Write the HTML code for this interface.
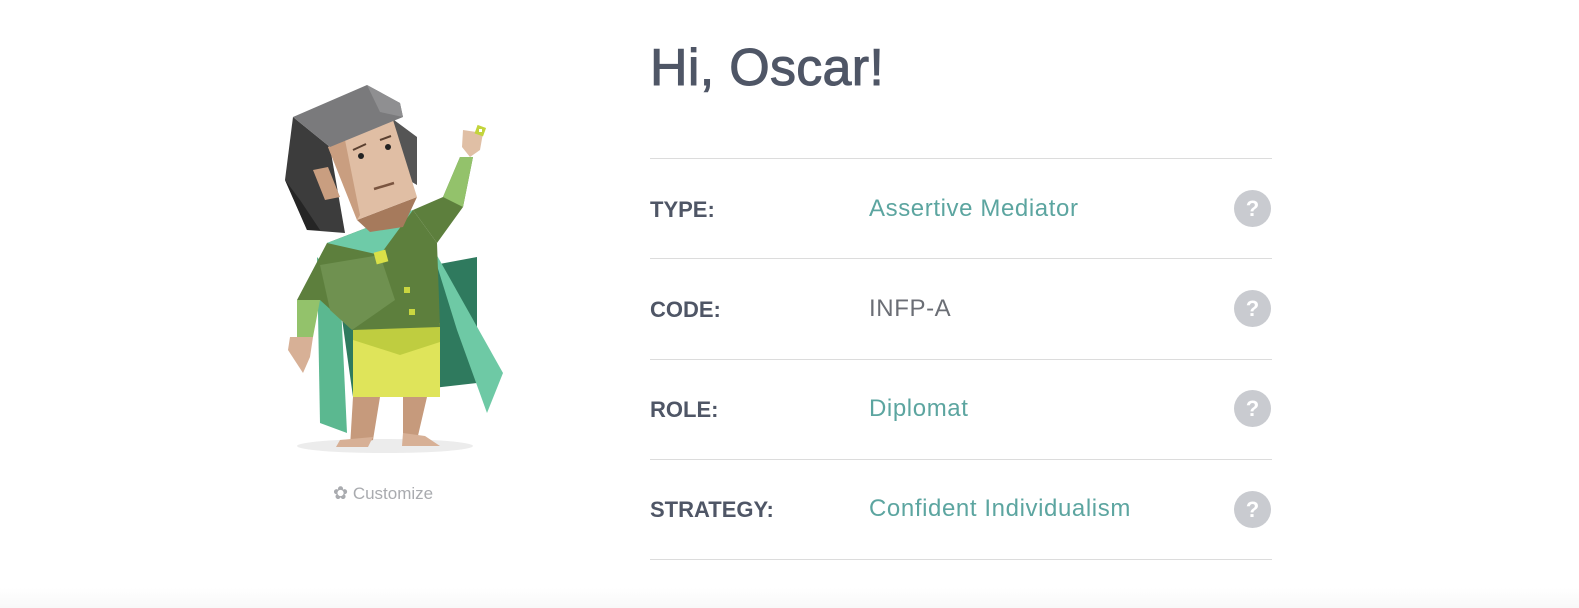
<!DOCTYPE html>
<html><head><meta charset="utf-8"><style>
html,body{margin:0;padding:0;background:#fff;width:1579px;height:608px;overflow:hidden;font-family:"Liberation Sans",sans-serif}
.bar{position:absolute;left:0;top:588px;width:1579px;height:20px;background:linear-gradient(#fff,#f8f8f8)}
h1{position:absolute;left:650px;top:38px;margin:0;font-size:52px;font-weight:normal;color:#4f5666;letter-spacing:0.3px;-webkit-text-stroke:1px #4f5666}
.line{position:absolute;left:650px;width:622px;height:1px;background:#dcdcdc}
.lab{position:absolute;left:650px;font-size:22px;font-weight:bold;color:#4f5666}
.val{position:absolute;left:869px;font-size:24px;letter-spacing:0.6px;color:#5ca5a0}
.q{position:absolute;left:1234px;width:37px;height:37px;border-radius:50%;background:#c9cbd0;color:#fff;font-weight:bold;font-size:22px;text-align:center;line-height:37px}
.cust{position:absolute;left:333px;top:483px;font-size:17px;color:#a9abaf}
</style></head><body>
<svg style="position:absolute;left:0;top:0" width="600" height="520">
<ellipse cx="385" cy="446" rx="88" ry="7" fill="#ececec"/>
<polygon points="337,283 477,257 477,383 353,397" fill="#2f7a5e"/>
<polygon points="317,257 340,283 347,433 320,423" fill="#5bb890"/>
<polygon points="430,243 503,373 487,413 457,330" fill="#6ec9a5"/>
<polygon points="353,397 380,397 373,440 350,447" fill="#c69a7c"/>
<polygon points="403,397 427,397 417,440 403,440" fill="#c69a7c"/>
<polygon points="340,440 373,437 368,447 336,447" fill="#d7b096"/>
<polygon points="403,433 425,436 440,446 402,446" fill="#d7b096"/>
<polygon points="353,330 440,323 440,397 353,397" fill="#dfe45a"/>
<polygon points="353,330 440,323 440,342 400,355 353,340" fill="#bfcd40"/>
<polygon points="297,300 327,243 413,210 437,243 440,327 353,330 320,300" fill="#5d7f3d"/>
<polygon points="320,265 380,255 395,300 352,330 330,310" fill="#6f9150"/>
<polygon points="327,243 413,210 380,255" fill="#6ecba8"/>
<polygon points="413,210 443,197 460,157 473,157 463,207 437,243" fill="#5d7f3d"/>
<polygon points="443,197 460,157 473,157 463,207" fill="#93c26b"/>
<polygon points="463,130 483,133 480,150 470,157 462,147" fill="#e0bfa5"/>
<rect x="476" y="126" width="9" height="9" fill="#c3d43c" transform="rotate(20 480 130)"/>
<rect x="479" y="129" width="3" height="3" fill="#fff"/>
<polygon points="297,300 320,300 313,337 297,337" fill="#93c26b"/>
<polygon points="290,337 313,337 310,357 303,373 288,350" fill="#d7b096"/>
<rect x="375" y="251" width="12" height="12" fill="#d9e048" transform="rotate(-15 381 257)"/>
<rect x="404" y="287" width="6" height="6" fill="#c9d640"/>
<rect x="409" y="309" width="6" height="6" fill="#c9d640"/>
<polygon points="285,180 293,117 330,147 345,233 307,230" fill="#3c3c3c"/>
<polygon points="285,180 300,200 320,230 307,230" fill="#252525"/>
<polygon points="390,117 417,137 417,185 400,175" fill="#555"/>
<polygon points="357,220 417,197 403,227 370,232" fill="#a67a5c"/>
<polygon points="328,147 393,120 417,197 357,220" fill="#e0bea4"/>
<polygon points="328,147 345,140 360,215 357,220" fill="#c99e80"/>
<polygon points="313,170 328,167 340,197 325,200" fill="#c99e80"/>
<polygon points="293,117 367,85 400,103 403,117 330,147" fill="#7a7a7c"/>
<polygon points="367,85 400,103 403,117 380,112" fill="#8f8f91"/>
<circle cx="361" cy="156" r="3" fill="#222"/>
<circle cx="388" cy="147" r="3" fill="#222"/>
<path d="M353,150 L366,144 M380,140 L391,136" stroke="#5a4030" stroke-width="2"/>
<path d="M374,189 L394,183" stroke="#7a5540" stroke-width="2.5"/>
</svg>
<div class="cust"><span style="font-size:18px">✿</span> Customize</div>
<h1>Hi, Oscar!</h1>
<div class="line" style="top:158px"></div>
<div class="lab" style="top:197px">TYPE:</div><div class="val" style="top:195px">Assertive Mediator</div><div class="q" style="top:190px">?</div>
<div class="line" style="top:258px"></div>
<div class="lab" style="top:297px">CODE:</div><div class="val" style="top:295px;color:#6b6e75">INFP-A</div><div class="q" style="top:290px">?</div>
<div class="line" style="top:359px"></div>
<div class="lab" style="top:397px">ROLE:</div><div class="val" style="top:395px">Diplomat</div><div class="q" style="top:390px">?</div>
<div class="line" style="top:459px"></div>
<div class="lab" style="top:497px">STRATEGY:</div><div class="val" style="top:495px">Confident Individualism</div><div class="q" style="top:491px">?</div>
<div class="line" style="top:559px"></div>
<div class="bar"></div>
</body></html>
